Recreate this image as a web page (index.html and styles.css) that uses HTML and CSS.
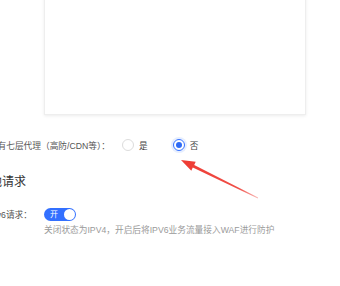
FILE: index.html
```html
<!doctype html>
<html lang="zh">
<head>
<meta charset="UTF-8">
<title>WAF 配置</title>
<link rel="stylesheet" href="styles.css">
</head>
<body>

<!-- 证书/配置文本框 -->
<div class="panel"></div>

<!-- 七层代理 -->
<div class="form-row proxy-row">
  <div class="label label-proxy"><span>是否有七层代理（高防/CDN等）：</span></div>
  <label class="radio"><span class="dot"></span>是</label>
  <label class="radio checked"><span class="dot"></span>否</label>
</div>

<!-- 分区标题 -->
<div class="section-title"><span>其他请求</span></div>

<!-- IPv6 -->
<div class="form-row ipv6-row">
  <div class="label label-ipv6"><span>IPv6请求：</span></div>
  <div class="switch on"><span class="switch-text">开</span><span class="knob"></span></div>
</div>
<div class="hint">关闭状态为IPV4，开启后将IPV6业务流量接入WAF进行防护</div>

<!-- 标注箭头 -->
<svg class="arrow" width="340" height="286" viewBox="0 0 340 286">
  <defs>
    <linearGradient id="fade" x1="181" y1="160" x2="258" y2="198" gradientUnits="userSpaceOnUse">
      <stop offset="0" stop-color="#ee3b33"/>
      <stop offset=".75" stop-color="#ee3b33" stop-opacity=".9"/>
      <stop offset="1" stop-color="#ee3b33" stop-opacity=".35"/>
    </linearGradient>
  </defs>
  <polygon fill="url(#fade)" points="181,160 195.7,161.7 194.2,164.9 258.1,197.6 257.9,198.4 192.8,167.5 191.3,170.7"/>
</svg>

</body>
</html>
```

FILE: styles.css
```css
html,body{margin:0;padding:0}
body{
  width:340px;height:286px;overflow:hidden;position:relative;
  background:#fff;color:#555;
  font-family:"Liberation Sans","Noto Sans CJK SC",sans-serif;font-size:8.7px}

/* ---- 文本框 ---- */
.panel{
  margin:-4px 0 0 44px;width:260px;height:118px;
  border:1px solid #eee;border-top:none;
  box-shadow:0 1px 3px rgba(0,0,0,.08)}

/* ---- 表单行 ---- */
.form-row{display:flex;align-items:center}
.label{display:flex;justify-content:flex-end;overflow:hidden;white-space:nowrap;margin-right:12px;flex:none}
.label-proxy{width:110px}
.label-ipv6{width:32px}

.proxy-row{margin-top:20px;height:20px}

.radio{display:flex;align-items:center;gap:5px;margin-right:25px;color:#444}
.radio .dot{
  width:10px;height:10px;border:1px solid #dcdcdc;border-radius:50%;
  display:flex;align-items:center;justify-content:center}
.radio.checked .dot{border-color:#3370ff;box-shadow:0 0 0 2px rgba(51,112,255,.12)}
.radio.checked .dot::after{content:"";width:6px;height:6px;border-radius:50%;background:#2f6bf5}

/* ---- 标题 ---- */
.section-title{
  margin-top:18px;width:26px;height:18px;line-height:18px;
  display:flex;justify-content:flex-end;overflow:hidden;white-space:nowrap;
  font-size:12px;color:#333}

/* ---- 开关 ---- */
.ipv6-row{margin-top:16px;height:14px}
.switch{
  width:32px;height:13px;border-radius:7px;background:#3370ff;
  display:flex;align-items:center;justify-content:space-between;
  padding:0 1px 0 6px;box-sizing:border-box}
.switch-text{color:#fff;font-size:8px;line-height:13px}
.knob{width:11px;height:11px;border-radius:50%;background:#fff}

.hint{margin:3px 0 0 44px;line-height:12px;color:#9a9a9a;white-space:nowrap}

/* ---- 标注 ---- */
.arrow{position:absolute;left:0;top:0}
```
